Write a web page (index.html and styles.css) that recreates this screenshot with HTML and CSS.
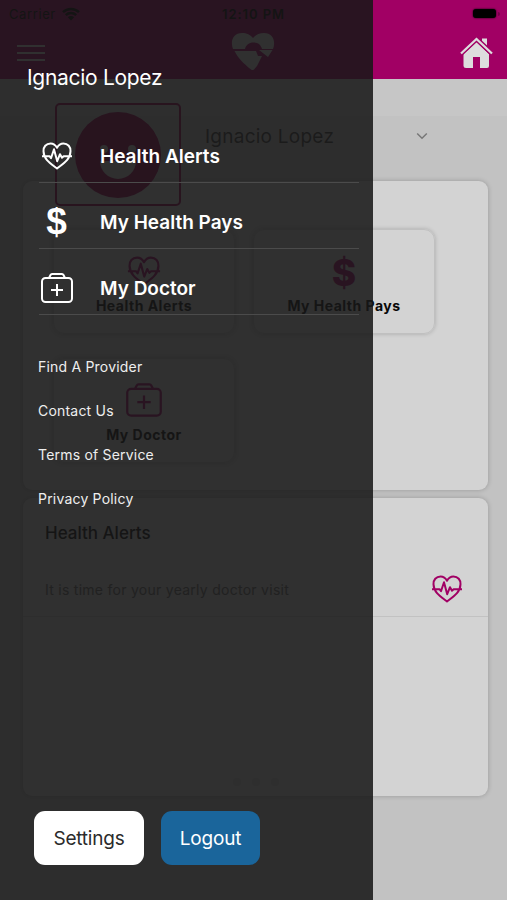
FILE: index.html
```html
<!DOCTYPE html>
<html lang="en">
<head>
<meta charset="utf-8">
<title>Member Home</title>
<link rel="stylesheet" href="styles.css">
</head>
<body>
<svg class="defs" aria-hidden="true">
  <symbol id="heart" viewBox="0 0 30 28">
    <path d="M15 5.800C13.500 3 11.500 1.500 8.600 1.500 4 1.500 1.300 5 1.500 9.200 1.700 17.500 8.500 21.500 15 26.500 21.500 21.500 28.300 17.500 28.500 9.200 28.700 5 26 1.500 21.400 1.500 18.500 1.500 16.500 3 15 5.800zM0 14.200h7.500l1.500 2 3-9 3.200 12 2.800-7 2 3.500 1.600-1.500H30" fill="none" stroke="currentColor" stroke-width="2" stroke-linejoin="round"/>
  </symbol>
  <symbol id="kit" viewBox="0 0 34 32">
    <rect x="2" y="6" width="30" height="24" rx="3.500" fill="none" stroke="currentColor" stroke-width="2"/>
    <path d="M9 6l1.500-3q.5-1 1.500-1h10q1 0 1.500 1L25 6M17 12v12M11 18h12" fill="none" stroke="currentColor" stroke-width="2"/>
  </symbol>
</svg>
<div class="screen">
  <header class="header">
    <div class="status">
      <div class="carrier">Carrier
        <svg width="18" height="14" viewBox="0 0 18 14"><path d="M1 5.200a11.500 11.500 0 0 1 16 0M3.800 8.200a7.500 7.500 0 0 1 10.400 0" fill="none" stroke="#000" stroke-width="2.500"/><path d="M9 13.500L5.800 10.200a4.600 4.600 0 0 1 6.400 0z"/></svg>
      </div>
      <div class="time">12:10 PM</div>
      <div class="battery"><i></i><b></b></div>
    </div>
    <div class="nav">
      <div class="burger"><i></i><i></i><i></i></div>
      <svg class="brand" width="44" height="39" viewBox="0 0 44 39"><path d="M2 17C-1 9 2 1 11 1c5 0 8 1.500 11 5 3-3.500 6-5 11-5 9 0 12 8 9 16H31c-1-4-4-6.500-8.500-6.500S15 13 14 17zM3.500 19H25l2 5h4l-5 10-3 3.500q-1.500 1-3 0C12 31 7 26 3.500 19zM28 18h13.500L37 25z" fill="#d5d5d5"/></svg>
      <svg class="home" width="33" height="32" viewBox="0 0 33 32"><path d="M22 1.500h5v11l-5-5z" fill="#ddd"/><path d="M3.500 17L16.500 5l12.500 12v12q0 2-2 2h-7V20h-7v11h-7q-2.500 0-2.500-2z" fill="#ddd"/><path d="M1 16.500L16.500 2 32 16.500" fill="none" stroke="#a10064" stroke-width="5"/><path d="M1 16.500L16.500 2 32 16.500" fill="none" stroke="#ddd" stroke-width="2.300"/></svg>
    </div>
  </header>
  <div class="band"></div>
  <main class="content">
    <section class="profile">
      <div class="avatar"><svg width="86" height="86" viewBox="0 0 86 86"><circle cx="43" cy="43" r="43" fill="#970052"/><circle cx="29" cy="37" r="4" fill="#ccc"/><circle cx="57" cy="37" r="4" fill="#ccc"/><path d="M25 49h36a18 18 0 0 1-36 0z" fill="#ccc"/></svg></div>
      <span class="member">Ignacio Lopez</span>
      <svg class="chevron" width="12" height="8" viewBox="0 0 12 8"><path d="M1.200 1.500L6 6.200l4.800-4.700" fill="none" stroke="#777" stroke-width="1.500"/></svg>
    </section>
    <section class="card tiles">
      <div class="tile"><svg width="34" height="30"><use href="#heart"/></svg><span>Health Alerts</span></div>
      <div class="tile"><div class="dollar">$</div><span>My Health Pays</span></div>
      <div class="tile"><svg class="kit" width="38" height="36"><use href="#kit"/></svg><span>My Doctor</span></div>
    </section>
    <section class="card alerts">
      <h2>Health Alerts</h2>
      <div class="alert"><span>It is time for your yearly doctor visit</span><svg width="30" height="28"><use href="#heart"/></svg></div>
      <div class="dots"><i></i><i></i><i></i></div>
    </section>
  </main>
  <aside class="drawer">
    <div class="name">Ignacio Lopez</div>
    <nav class="menu">
      <a><svg width="30" height="28"><use href="#heart"/></svg><span>Health Alerts</span></a>
      <a><b class="money">$</b><span>My Health Pays</span></a>
      <a><svg width="34" height="32"><use href="#kit"/></svg><span>My Doctor</span></a>
    </nav>
    <nav class="links">
      <a>Find A Provider</a><a>Contact Us</a><a>Terms of Service</a><a>Privacy Policy</a>
    </nav>
    <div class="actions"><button class="settings">Settings</button><button class="logout">Logout</button></div>
  </aside>
</div>
</body>
</html>
```

FILE: styles.css
```css
* { box-sizing: border-box; }
body { margin: 0; font-family: Inter, "Liberation Sans", sans-serif; }
svg { display: block; flex: none; }
.defs { position: absolute; width: 0; height: 0; }
.screen { position: relative; width: 507px; height: 900px; overflow: hidden; background: #c2c2c2; }
.header { height: 79px; background: #a10064; }
.status { display: grid; grid-template-columns: 1fr auto 1fr; align-items: center; height: 27px; padding: 0 7px 0 9px; font-size: 13px; color: #000; }
.carrier { display: flex; align-items: center; gap: 6px; letter-spacing: .6px; }
.time { margin-right: 2px; font-weight: 600; letter-spacing: .95px; }
.battery { display: flex; align-items: center; justify-content: flex-end; gap: 2px; }
.battery i { width: 23px; height: 9px; border-radius: 3px; background: #000; box-shadow: 0 0 2px #000; }
.battery b { width: 2px; height: 4px; border-radius: 0 2px 2px 0; background: #75004a; }
.nav { display: flex; align-items: center; justify-content: space-between; height: 52px; padding: 0 14px 0 17px; }
.burger { display: flex; flex-direction: column; gap: 5px; width: 28px; }
.burger i { height: 2px; background: #d5d5d5; }
.brand { margin: -3px 0 0 1px; }
.home { margin-top: -1px; }
.band { height: 37px; background: #c6c6c6; }
.content { margin-top: -12px; padding: 0 19px 0 23px; }
.profile { display: flex; align-items: center; height: 77px; padding-left: 32px; }
.avatar { display: flex; align-items: center; justify-content: center; width: 126px; height: 103px; margin-top: 24px; border: 2px solid #970052; border-radius: 5px; }
.member { width: 130px; margin: -12px 0 0 24px; font-size: 19px; letter-spacing: .25px; white-space: nowrap; color: #3c3c3c; }
.chevron { margin: -14px 0 0 81px; }
.card { border-radius: 9px; background: #d3d3d3; box-shadow: 0 0 5px rgba(0,0,0,.22); }
.tiles { display: grid; grid-template-columns: 182px 182px; grid-auto-rows: 105px; gap: 24px 18px; height: 309px; padding: 48px 0 0 30px; }
.tile { display: flex; flex-direction: column; align-items: center; justify-content: flex-end; gap: 10px; padding-bottom: 17px; border: 1px solid #c0c0c0; border-radius: 11px; box-shadow: 0 0 4px rgba(0,0,0,.2); color: #a10064; }
.tile span { font-size: 14px; font-weight: 700; letter-spacing: .5px; line-height: 20px; white-space: nowrap; color: #080808; }
.kit { margin-bottom: -3px; }
.dollar { height: 43px; margin-bottom: -8px; font: 800 37px/43px Inter, sans-serif; }
.alerts { height: 298px; margin-top: 8px; }
.alerts h2 { height: 59px; margin: 0; padding: 24px 0 0 22px; font-size: 17px; line-height: 22px; font-weight: 500; color: #080808; }
.alert { display: flex; align-items: center; justify-content: space-between; height: 60px; padding: 5px 26px 0 22px; border-bottom: 1px solid #c2c2c2; color: #a10064; }
.alert span { font-size: 14px; letter-spacing: .27px; color: #666; }
.dots { display: flex; justify-content: center; gap: 11px; padding: 161px 0 0; }
.dots i { width: 8px; height: 8px; border-radius: 50%; background: #c4c4c4; }
.drawer { position: absolute; top: 0; left: 0; width: 372.5px; height: 900px; padding: 63px 14px 0 27px; background: rgba(23,23,23,.87); color: #fff; }
.name { height: 60px; font-size: 21px; line-height: 29px; letter-spacing: -.3px; white-space: nowrap; }
.menu { margin-left: 12px; }
.menu a { display: grid; grid-template-columns: 35px 1fr; column-gap: 26px; align-items: center; justify-items: center; width: 320px; height: 66px; padding-top: 14px; border-bottom: 1px solid #4b4b4b; }
.menu a:first-child { height: 60px; padding-top: 7px; }
.menu svg { margin-top: -1px; }
.menu span { justify-self: start; font-size: 19px; font-weight: 600; white-space: nowrap; }
.money { margin-top: -1px; font: bold 37px/38px "Liberation Sans", sans-serif; }
.links { display: flex; flex-direction: column; margin: 42px 0 0 11px; height: 176px; }
.links a { height: 44px; font-size: 14px; line-height: 20px; letter-spacing: .2px; color: #eee; }
.actions { display: flex; gap: 17px; margin: 278px 0 0 7px; }
.actions button { height: 54px; padding: 0; border: 0; border-radius: 11px; font: 19px Inter, sans-serif; letter-spacing: -.2px; }
.settings { width: 110px; background: #fff; color: #2b2b2b; }
.logout { width: 99px; background: #1a659b; color: #fff; }
```
